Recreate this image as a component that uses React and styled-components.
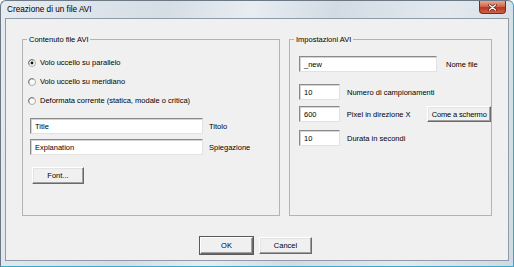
import React from 'react'
import styled, { createGlobalStyle } from 'styled-components'

const Global = createGlobalStyle`
  html, body {
    margin: 0;
    padding: 0;
  }
  body {
    width: 514px;
    height: 267px;
    overflow: hidden;
    font-family: 'Liberation Sans', Arial, sans-serif;
  }
`

const Window = styled.div`
  box-sizing: border-box;
  width: 514px;
  height: 267px;
  display: flex;
  flex-direction: column;
  padding: 0 4px 5px 4px;
  border: 1px solid #6c7884;
  border-right-color: #3aa8c8;
  border-bottom-color: #3aa8c8;
  border-radius: 6px 6px 0 0;
  background: linear-gradient(
    100deg,
    #e6ebf0 0%,
    #d5dde5 30%,
    #e8edf2 45%,
    #d2dbe4 60%,
    #e3e9ef 80%,
    #d0d9e2 100%
  );
`

const TitleBar = styled.div`
  height: 17px;
  display: flex;
  align-items: center;
  justify-content: space-between;
`

const Caption = styled.span`
  padding-left: 2px;
  font-size: 8.2px;
  color: #000;
`

const CloseButton = styled.div`
  width: 25px;
  height: 12px;
  margin-top: -4px;
  margin-right: 3px;
  display: flex;
  align-items: center;
  justify-content: center;
  border: 1px solid #7a2a1c;
  border-top: none;
  border-radius: 0 0 4px 4px;
  background: linear-gradient(#e8a893 0%, #d2664c 45%, #b9371d 55%, #d0614a 100%);
`

const Client = styled.div`
  flex: 1;
  display: flex;
  flex-direction: column;
  border: 1px solid #8f9ba6;
  background: #f0f0f0;
  font-size: 7.5px;
  color: #000;
`

const Panels = styled.div`
  display: flex;
  gap: 9px;
  padding: 20px 16px 0 16px;
`

const Group = styled.div`
  position: relative;
  box-sizing: border-box;
  width: ${p => p.$width}px;
  height: 177px;
  border: 1px solid #b4b4b4;
  display: flex;
  flex-direction: column;
  padding: ${p => p.$pad};
`

const Legend = styled.span`
  position: absolute;
  top: -6px;
  left: 4px;
  padding: 0 2px;
  background: #f0f0f0;
  line-height: 11px;
`

const RadioRow = styled.label`
  height: 19px;
  display: flex;
  align-items: center;
  gap: 4px;
`

const Row = styled.div`
  display: flex;
  align-items: center;
  gap: ${p => p.$gap || 6}px;
  margin-top: ${p => p.$mt || 0}px;
  margin-left: ${p => p.$ml || 0}px;
`

const Field = styled.div`
  box-sizing: border-box;
  width: ${p => p.$w}px;
  height: 16px;
  padding-left: 4px;
  display: flex;
  align-items: center;
  background: #fff;
  border-top: 1px solid #8a8a8a;
  border-left: 1px solid #8a8a8a;
  border-right: 1px solid #e2e2e2;
  border-bottom: 1px solid #e2e2e2;
  box-shadow: inset 1px 1px 0 #d4d4d4;
`

const Label = styled.span`
  width: ${p => (p.$w ? `${p.$w}px` : 'auto')};
  white-space: nowrap;
`

const Button = styled.div`
  box-sizing: border-box;
  width: ${p => p.$w}px;
  height: ${p => p.$h || 17}px;
  display: flex;
  align-items: center;
  justify-content: center;
  white-space: nowrap;
  letter-spacing: ${p => (p.$tight ? '-0.15px' : 'normal')};
  background: #f0f0f0;
  border-top: 1px solid #fff;
  border-left: 1px solid #fff;
  border-right: 1px solid #6a6a6a;
  border-bottom: 1px solid #6a6a6a;
  box-shadow: ${p =>
    p.$default
      ? '0 0 0 1px #5a5a5a, inset -1px -1px 0 #a0a0a0'
      : 'inset -1px -1px 0 #a0a0a0, inset 1px 1px 0 #e3e3e3'};
`

const Footer = styled.div`
  display: flex;
  justify-content: center;
  gap: 6px;
  margin-top: 21px;
  padding-right: 2px;
`

const RadioIcon = ({ checked }) => (
  <svg width="8" height="8" viewBox="0 0 8 8">
    <circle cx="4" cy="4" r="3.5" fill="#fafafa" stroke="#9a9a9a" strokeWidth="0.8" />
    <path d="M1.2 5.6 A3.2 3.2 0 0 1 5.6 1.2" fill="none" stroke="#5a5a5a" strokeWidth="0.8" />
    {checked && <circle cx="4" cy="4" r="1.4" fill="#111" />}
  </svg>
)

const CloseGlyph = () => (
  <svg width="9" height="7" viewBox="0 0 9 7">
    <path d="M1.5 1 L7.5 6 M7.5 1 L1.5 6" stroke="#5a1a10" strokeWidth="2.6" strokeLinecap="round" />
    <path d="M1.5 1 L7.5 6 M7.5 1 L1.5 6" stroke="#fff" strokeWidth="1.4" strokeLinecap="round" />
  </svg>
)

const options = [
  'Volo uccello su parallelo',
  'Volo uccello su meridiano',
  'Deformata corrente (statica, modale o critica)',
]

export default function App() {
  return (
    <>
      <Global />
      <Window>
        <TitleBar>
          <Caption>Creazione di un file AVI</Caption>
          <CloseButton>
            <CloseGlyph />
          </CloseButton>
        </TitleBar>
        <Client>
          <Panels>
            <Group $width={259} $pad="13px 0 0 5px">
              <Legend>Contenuto file AVI</Legend>
              {options.map((o, i) => (
                <RadioRow key={o}>
                  <RadioIcon checked={i === 0} />
                  {o}
                </RadioRow>
              ))}
              <Row $mt={8} $ml={2}>
                <Field $w={173}>Title</Field>
                <Label>Titolo</Label>
              </Row>
              <Row $mt={5} $ml={2}>
                <Field $w={173}>Explanation</Field>
                <Label>Spiegazione</Label>
              </Row>
              <Row $mt={12} $ml={4}>
                <Button $w={52}>Font...</Button>
              </Row>
            </Group>
            <Group $width={203} $pad="16px 0 0 9px">
              <Legend>Impostazioni AVI</Legend>
              <Row $gap={9}>
                <Field $w={138}>_new</Field>
                <Label>Nome file</Label>
              </Row>
              <Row $mt={12} $gap={7}>
                <Field $w={41}>10</Field>
                <Label>Numero di campionamenti</Label>
              </Row>
              <Row $mt={6} $gap={7}>
                <Field $w={41}>600</Field>
                <Label $w={74}>Pixel in direzione X</Label>
                <Button $w={64} $h={16} $tight>Come a schermo</Button>
              </Row>
              <Row $mt={8} $gap={7}>
                <Field $w={41}>10</Field>
                <Label>Durata in secondi</Label>
              </Row>
            </Group>
          </Panels>
          <Footer>
            <Button $w={53} $default>OK</Button>
            <Button $w={53}>Cancel</Button>
          </Footer>
        </Client>
      </Window>
    </>
  )
}
